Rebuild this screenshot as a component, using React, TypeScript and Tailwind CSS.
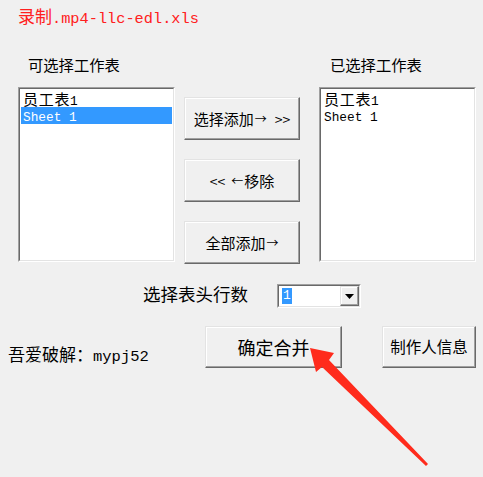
import React from 'react';

const CJK = "font-['Noto_Sans_CJK_SC',sans-serif]";
const MONO = "font-['Liberation_Mono','Noto_Sans_CJK_SC',monospace]";

// win classic raised button
const RAISED =
  'bg-[#f0f0f0] border border-t-[#e3e3e3] border-l-[#e3e3e3] border-r-[#696969] border-b-[#696969] shadow-[inset_-1px_-1px_0_#a0a0a0,inset_1px_1px_0_#ffffff]';

interface ListBoxProps {
  items: { cjk?: string; latin: string }[];
  selected?: number;
}

const ListBox: React.FC<ListBoxProps> = ({ items, selected }) => (
  <div className="w-[157px] h-[175px] border border-t-[#a0a0a0] border-l-[#a0a0a0] border-r-white border-b-white">
    <div className="h-full bg-white border border-t-[#696969] border-l-[#696969] border-r-[#e3e3e3] border-b-[#e3e3e3] p-px">
      {items.map((it, i) => (
        <div
          key={i}
          className={`h-[17px] pl-[2px] whitespace-pre leading-[17px] ${
            selected === i ? 'bg-[#3399ff] text-white' : 'text-black'
          }`}
        >
          {it.cjk && <span className={`${CJK} text-[15px] tracking-[0.7px] leading-[17px]`}>{it.cjk}</span>}
          <span className={`${MONO} text-[12.8px] leading-[17px]`}>{it.latin}</span>
        </div>
      ))}
    </div>
  </div>
);

const SHEETS = [{ cjk: '员工表', latin: '1' }, { latin: 'Sheet 1' }];

export default function App() {
  return (
    <div className="relative w-[483px] h-[477px] overflow-hidden bg-[#f0f0f0] text-black">
      {/* title */}
      <div className="h-[32px] pl-[18px] pt-[6px] text-[#ff2020] leading-[20px] whitespace-pre">
        <span className={`${CJK} text-[17px]`}>录制</span>
        <span className={`${MONO} text-[15.3px]`}>.mp4-llc-edl.xls</span>
      </div>

      {/* list labels */}
      <div className={`h-[55px] pt-[11px] pl-[28px] flex items-center ${CJK} text-[15.3px] leading-none`}>
        <span className="w-[302px]">可选择工作表</span>
        <span>已选择工作表</span>
      </div>

      {/* lists + move buttons */}
      <div className="h-[177px] pl-[18px] flex items-start">
        <ListBox items={SHEETS} selected={1} />
        <div className={`ml-[9px] mt-[10px] w-[116px] flex flex-col gap-[19px] ${CJK} text-[15px] leading-none`}>
          <button className={`${RAISED} h-[43px] flex items-center justify-center`}>
            <span>选择添加</span>
            <span className="text-[12px] ml-px">→</span>
            <span className="text-[14px] ml-[8px]">&gt;&gt;</span>
          </button>
          <button className={`${RAISED} h-[43px] flex items-center justify-center`}>
            <span className="text-[14px] mr-[6px]">&lt;&lt;</span>
            <span className="text-[12px] mr-px">←</span>
            <span>移除</span>
          </button>
          <button className={`${RAISED} h-[43px] flex items-center justify-center`}>
            <span>全部添加</span>
            <span className="text-[12px] ml-px">→</span>
          </button>
        </div>
        <div className="ml-[19px]">
          <ListBox items={SHEETS} />
        </div>
      </div>

      {/* header rows */}
      <div className="mt-[20px] h-[24px] pl-[143px] flex items-center">
        <span className={`w-[134px] pb-[5px] ${CJK} text-[17.5px] leading-none`}>选择表头行数</span>
        <div className="w-[84px] h-[24px] border border-t-[#a0a0a0] border-l-[#a0a0a0] border-r-white border-b-white">
          <div className="h-full bg-white border border-t-[#696969] border-l-[#696969] border-r-[#e3e3e3] border-b-[#e3e3e3] flex items-center pl-[3px]">
            <span className={`${MONO} text-[13px] leading-[16px] bg-[#3399ff] text-white px-px`}>1</span>
            <div className={`${RAISED} ml-auto w-[19px] h-full flex items-center justify-center`}>
              <svg width="9" height="5" viewBox="0 0 9 5">
                <path d="M0 0h9L4.5 5z" fill="#000" />
              </svg>
            </div>
          </div>
        </div>
      </div>

      {/* bottom row */}
      <div className="mt-[18px] h-[42px] pl-[8px] flex items-center">
        <div className="w-[197px] flex items-baseline leading-none pt-[17px]">
          <span className={`${CJK} text-[17px]`}>吾爱破解：</span>
          <span className={`${MONO} text-[15.5px]`}>mypj52</span>
        </div>
        <button className={`${RAISED} w-[137px] h-[42px] flex items-center justify-center ${CJK} text-[18px] leading-none`}>
          确定合并
        </button>
        <button className={`${RAISED} ml-[40px] w-[94px] h-[42px] flex items-center justify-center ${CJK} text-[15.5px] leading-none`}>
          制作人信息
        </button>
      </div>

      {/* annotation arrow drawn over the screenshot */}
      <svg className="absolute inset-0 pointer-events-none" width="483" height="477" viewBox="0 0 483 477">
        <polygon
          points="310,348 334,353 329,360 428,464 426,466 322,367 316,372"
          fill="#ff2b1c"
        />
      </svg>
    </div>
  );
}
